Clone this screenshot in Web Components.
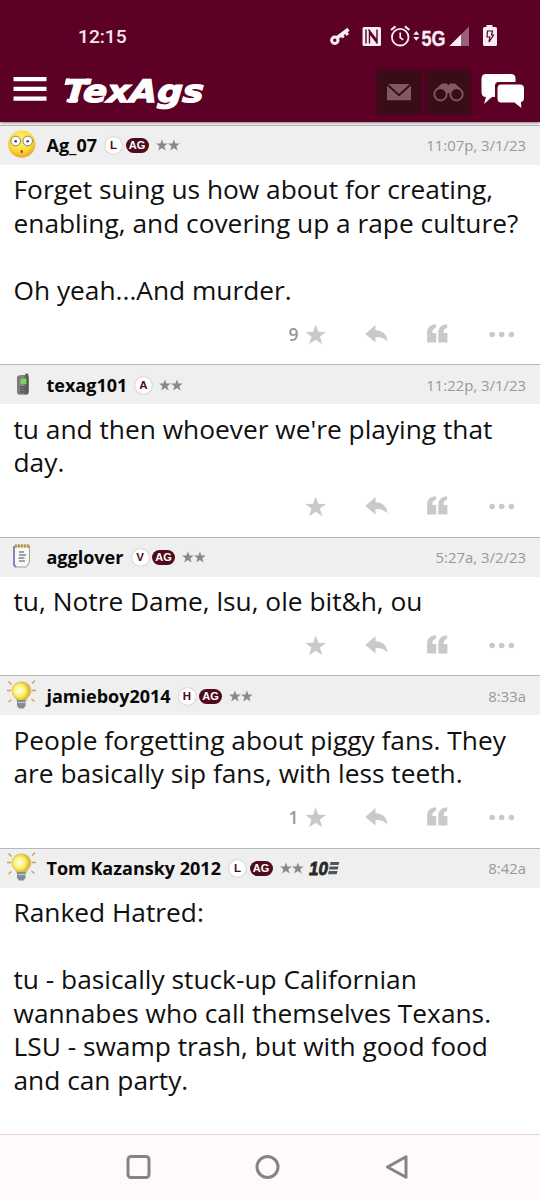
<!DOCTYPE html>
<html lang="en">
<head>
<meta charset="utf-8">
<title>TexAgs</title>
<style>
html,body{margin:0;height:100%;background:#fff}
body{font-family:"Open Sans",sans-serif;color:#101010}
</style>
</head>
<body>
<forum-app></forum-app>
<script>
const define=(name,html,setup)=>customElements.define(name,class extends HTMLElement{
  constructor(){
    super();
    const t=document.createElement('template');
    t.innerHTML=html;
    this.attachShadow({mode:'open'}).append(t.content.cloneNode(true));
  }
  connectedCallback(){ if(setup) setup(this,this.shadowRoot); }
});

define('status-bar',`<style>
:host{display:flex;height:72px;box-sizing:border-box;padding-left:78px;color:#f6e6ec;font:500 19.2px/74px Roboto,sans-serif}
span{flex:1}
svg{display:block;flex:none}
</style><span>12:15</span>
<svg width="210" height="72" viewBox="330 0 210 72" fill="#f6eef1">
<g fill="none" stroke="#f6eef1"><circle cx="334.8" cy="40.3" r="3.2" stroke-width="3"/><path d="M337.5 37.5L348.5 29.3" stroke-width="3.6"/><path d="M344.500 31l3.4 4M341 34.500l2.6 3" stroke-width="3"/></g>
<rect x="362.500" y="27" width="18.500" height="19" rx="1.500"/>
<path d="M366 29.500V43.500M368.500 29.500l8.500 11V29.500M369.500 43.500V33l8 10.500" fill="none" stroke="#5c0025" stroke-width="1.400"/>
<g fill="none" stroke="#f6eef1"><circle cx="400.200" cy="37.200" r="8.300" stroke-width="1.800"/><path d="M391 30l4.500-3.600M409.400 30l-4.500-3.600" stroke-width="2"/><path d="M400.200 32.500v5l3 2.300" stroke-width="1.600"/></g>
<path d="M413.200 34.700h6.200l-3.100-3.800zM413.200 37h6.200l-3.100 3.800z"/>
<text transform="translate(421.500 46.300) scale(.82 1)" font-family="Liberation Sans" font-weight="700" font-size="22" stroke="#f6eef1" stroke-width=".3">5G</text>
<path d="M469 26.500V46H449.500z" fill="#98607a"/><path d="M461 34.500V46H449.500z"/>
<path d="M486.500 25h6v2h3a1.500 1.500 0 0 1 1.500 1.500v16a1.500 1.500 0 0 1-1.500 1.500h-11a1.500 1.500 0 0 1-1.500-1.500v-16a1.500 1.500 0 0 1 1.500-1.500h2z"/>
<path d="M487.500 31h5l-1 4h2l-4.500 7 .8-5h-2.800z" fill="none" stroke="#5c0025" stroke-width="1.200"/>
</svg>`);

define('site-header',`<style>
:host{display:flex;height:50px;box-sizing:border-box}
svg{display:block;flex:none}
.logo{flex:1}
.btn{width:44px;height:44px;margin:-2px 5px 0 0;background:#3a0c17;border-radius:3px;box-shadow:0 0 3px #40001a}
.btn+.btn{margin-right:6px}
.chat{margin:0 10px 0 0}
</style>
<svg class="logo" height="50" viewBox="0 72 375 50" preserveAspectRatio="xMinYMin">
<path d="M13.500 77h33v4.300h-33zM13.500 86.700h33V91h-33zM13.500 96.500h33v4.300h-33z" fill="#fff"/>
<text transform="translate(63 101.800) skewX(-4)" font-family="DejaVu Sans" font-style="italic" font-weight="700" font-size="31" fill="#fff" stroke="#fff" stroke-width="1.300" textLength="140" lengthAdjust="spacingAndGlyphs">TexAgs</text>
<path d="M66 78.500h4l-1.500 6.500h-4zM86 78.500h3.500l-1.500 6h-3.500zM67 98.800h11.500l-.8 3.500H66.200z" fill="#fff"/></svg>
<svg class="btn" viewBox="377 70 44 44"><path d="M387 84h24v16.300h-24z" fill="#7f5a65"/><path d="M387 84.200l12 11 12-11" fill="none" stroke="#3a0c17" stroke-width="2"/></svg>
<svg class="btn" viewBox="426 70 44 44"><path d="M436 89l6-5.500h5l1.500 2 1.500-2h5l6 5.500-5 5-6-1h-3l-6 1z" fill="#7f5a65"/><g fill="#3a0c17" stroke="#7f5a65" stroke-width="1.800"><circle cx="440.500" cy="94.300" r="6.200"/><circle cx="456.500" cy="94.300" r="6.200"/></g></svg>
<svg class="chat" width="54" height="50" viewBox="476 72 54 50" fill="#fff"><path d="M486 74h25q4.500 0 4.500 4.500V82h-17q-3.500 0-3.500 4v11h-3l-8 7 2-7q-4.500 0-4.500-5V79q0-5 4.500-5z"/><path d="M501 84.500h19q4 0 4 4v9q0 4-3 4.500l.3 6-6.800-5.500H501q-3.500 0-3.500-4v-10q0-4 3.500-4z"/></svg>`);

define('rank-badge',`<style>
:host{display:inline-flex;align-items:center;justify-content:center;box-sizing:border-box;height:17px;min-width:17px;border-radius:9px;font:700 11.500px/17px "Liberation Sans",sans-serif;color:#500b1b;background:#fff;box-shadow:0 0 1.500px #999}
:host([ag]){width:23px;height:15px;background:#500b1b;color:#fff;box-shadow:none;font-size:11px}
</style><slot></slot>`);

const STAR='M0-10L2.500-3.200 9.800-3.100 4 1.300 6.200 8.600 0 4.300-6.200 8.600-4 1.300-9.800-3.100-2.500-3.200z';
const AVATARS={
face:`<defs><radialGradient id="f" cx=".45" cy=".35" r=".6"><stop offset="0" stop-color="#fff46e"/><stop offset=".7" stop-color="#fbdc3c"/><stop offset="1" stop-color="#eeb12c"/></radialGradient></defs><circle cx="21.700" cy="18" r="13.700" fill="url(#f)"/><g fill="#fff" stroke="#8b8269"><circle cx="15.700" cy="15" r="4.800"/><circle cx="27.700" cy="15" r="4.800"/></g><g fill="#445"><circle cx="15.700" cy="15.300" r="1.300"/><circle cx="27.700" cy="15.300" r="1.300"/></g><ellipse cx="21.700" cy="25.500" rx="1.100" ry="1.800" fill="#a9441b"/>`,
phone:`<defs><linearGradient id="p"><stop stop-color="#777"/><stop offset=".5" stop-color="#8b8b8b"/><stop offset="1" stop-color="#444"/></linearGradient></defs><path d="M17 11q1-2 4-2h4l.5-1.500 2.500.3.700 4v14q0 3-3 3h-6q-2.700 0-2.700-3z" fill="url(#p)"/><path d="M20.500 13l6-.5v5.500h-6z" fill="#79d45e"/><path d="M20 21h6M20 23.500h6M20 26h5.500" stroke="#555" stroke-width="1.500"/>`,
note:`<path d="M14.500 8h15v16l-3 5H15.500l-2-2z" fill="#f7f8f2" stroke="#9a9ea0"/><path d="M14 8v19l2 2" fill="none" stroke="#8486bd" stroke-width="2"/><path d="M15 8h15" stroke="#b99a4e" stroke-width="3.500" stroke-dasharray="2 1"/><path d="M19 14h5M19 17h7M18.500 20h6M19 23h6" stroke="#75889a" stroke-width="1.500"/>`,
bulb:`<defs><radialGradient id="b" cx=".4" cy=".45"><stop offset="0" stop-color="#fffff0"/><stop offset=".6" stop-color="#fcf36a"/><stop offset="1" stop-color="#ddb93b"/></radialGradient></defs><g stroke="#c8a455" stroke-width="1.500"><path d="M8.500 4.500l3 3M35 3.500l-3 3M7 13.500h4M36 13.500h-4M8.500 25l3-2.500M34.500 24.500l-3-2.500"/></g><path d="M21.500 5c-6 0-9.500 4-9.500 9 0 5 4 6 5 10h9c1-4 5-5.500 5-10 0-5-3.500-9-9.500-9z" fill="url(#b)" stroke="#d5b864" stroke-width=".7"/><path d="M17 23h8.500v6l-2 2.500h-4.500l-2-2.500z" fill="#828d94"/><path d="M18 25.500h7" stroke="#c8d0d3"/>`};

define('user-avatar',`<style>:host{display:block;width:46.500px;height:38px}svg{display:block;overflow:visible}</style><svg width="46" height="38"></svg>`,
 (el,r)=>{r.querySelector('svg').innerHTML=AVATARS[el.getAttribute('kind')]});

define('star-pair',`<style>:host{display:block;margin-left:7px}svg{display:block}</style>
<svg width="24" height="12" viewBox="0 0 24 12" fill="#898989"><path transform="translate(5.900 6.400) scale(.6)" d="${STAR}"/><path transform="translate(17.900 6.400) scale(.6)" d="${STAR}"/></svg>`);

define('ten-badge',`<style>:host{display:block;margin-left:4px}svg{display:block;overflow:visible}</style>
<svg width="34" height="22" viewBox="-1 -3 34 22"><text x="0" y="15.200" font-family="Liberation Sans" font-size="18.500" font-weight="700" font-style="italic" fill="#292929" stroke="#292929" stroke-width=".8" textLength="19" lengthAdjust="spacingAndGlyphs">10</text><path d="M21.500 2h8.800l-.8 3.100H21zM20.700 6.500h8.800l-.8 3.100h-8.700zM19.700 11h8.800l-.8 3.300H19z" fill="#555"/></svg>`);

define('post-actions',`<style>
:host{display:block;height:57.500px;margin-top:-.8px}
svg{display:block}
</style><svg width="540" height="57" fill="#c9c9c9">
<text x="288.500" y="34" font-family="Open Sans" font-size="17.500" font-weight="600" fill="#999"></text>
<path transform="translate(315.700 28.200) scale(1.060)" d="${STAR}"/>
<path d="M365.300 27l10.200-9v5.200c7 .2 11.500 4 12 11.300-3-3.300-6.500-4.500-12-4.500v5.500z"/>
<path d="M436 17.200v3.500c-2.800.6-3.700 2.500-3.700 5.300h3.900v9.500h-9.100v-9.500c0-5.500 3-8.500 8.900-8.800zM447.200 17.200v3.500c-2.800.6-3.700 2.500-3.700 5.300h3.900v9.500h-9.100v-9.500c0-5.500 3-8.500 8.900-8.800z"/>
<circle cx="492.200" cy="27.500" r="2.800"/><circle cx="501.700" cy="27.500" r="2.800"/><circle cx="511.300" cy="27.500" r="2.800"/></svg>`,
(el,r)=>{const n=el.getAttribute('likes');const t=r.querySelector('text');if(n)t.textContent=n;else t.remove()});

define('forum-post',`<style>
:host{display:block}
header{display:flex;align-items:center;height:40.100px;box-sizing:border-box;background:#efefef;border-top:1.500px solid #b7b7b7;padding-right:14px}
.name{font-weight:700;font-size:18px;color:#080808;white-space:nowrap;margin-right:8.500px}
.badges{display:flex;align-items:center;gap:3.500px;padding-top:1px}
time{margin-left:auto;font-size:14.900px;color:#999;white-space:nowrap}
.body{padding:8.300px 0 0 13.500px;font-size:26.300px;line-height:33.600px;white-space:pre;color:#101010}
</style>
<header><user-avatar></user-avatar><span class="name"></span><span class="badges"></span><star-pair></star-pair><time></time></header>
<div class="body"><slot></slot></div><post-actions></post-actions>`,
(el,r)=>{
 const a=n=>el.getAttribute(n);
 r.querySelector('.name').textContent=a('name');
 r.querySelector('.name').style.width=a('name-width')+'px';
 r.querySelector('time').textContent=a('time');
 const av=document.createElement('user-avatar');av.setAttribute('kind',a('avatar'));r.querySelector('user-avatar').replaceWith(av);
 r.querySelector('.badges').innerHTML='<rank-badge>'+a('rank')+'</rank-badge>'+(el.hasAttribute('ag')?'<rank-badge ag>AG</rank-badge>':'');
 if(el.hasAttribute('ten'))r.querySelector('star-pair').after(document.createElement('ten-badge'));
 const old=r.querySelector('post-actions');
 if(el.hasAttribute('no-actions')){old.remove();return}
 const p=document.createElement('post-actions');if(a('likes'))p.setAttribute('likes',a('likes'));old.replaceWith(p);
});

define('nav-bar',`<style>:host{display:block;height:66px;box-sizing:border-box;background:#fffafa;border-top:1.500px solid #efd3d3}svg{display:block}</style>
<svg width="540" height="64" fill="none" stroke="#858383" stroke-width="3"><rect x="128" y="21.500" width="21" height="21" rx="3"/><circle cx="267.500" cy="32" r="10.500"/><path d="M406 21.700v20.600L387.500 32z" stroke-linejoin="round"/></svg>`);

define('forum-app',`<style>
:host{display:flex;flex-direction:column;height:1200px;width:540px;overflow:hidden;background:#fff}
.top{background:#5c0025;height:122px;flex:none;box-shadow:0 1px 3px #777;z-index:1}
main{flex:1;min-height:0;overflow:hidden;padding-top:2.800px}
nav-bar{flex:none}
</style>
<div class="top"><status-bar></status-bar><site-header></site-header></div>
<main>
<forum-post name="Ag_07" name-width="50" avatar="face" rank="L" ag time="11:07p, 3/1/23" likes="9">Forget suing us how about for creating,
enabling, and covering up a rape culture?

Oh yeah...And murder.</forum-post>
<forum-post name="texag101" name-width="80" avatar="phone" rank="A" time="11:22p, 3/1/23">tu and then whoever we're playing that
day.</forum-post>
<forum-post name="agglover" name-width="76.500" avatar="note" rank="V" ag time="5:27a, 3/2/23">tu, Notre Dame, lsu, ole bit&amp;h, ou</forum-post>
<forum-post name="jamieboy2014" name-width="123.500" avatar="bulb" rank="H" ag time="8:33a" likes="1">People forgetting about piggy fans. They
are basically sip fans, with less teeth.</forum-post>
<forum-post name="Tom Kazansky 2012" name-width="174" avatar="bulb" rank="L" ag ten no-actions time="8:42a">Ranked Hatred:

tu - basically stuck-up Californian
wannabes who call themselves Texans.
LSU - swamp trash, but with good food
and can party.</forum-post>
</main><nav-bar></nav-bar>`);
</script>
</body>
</html>
